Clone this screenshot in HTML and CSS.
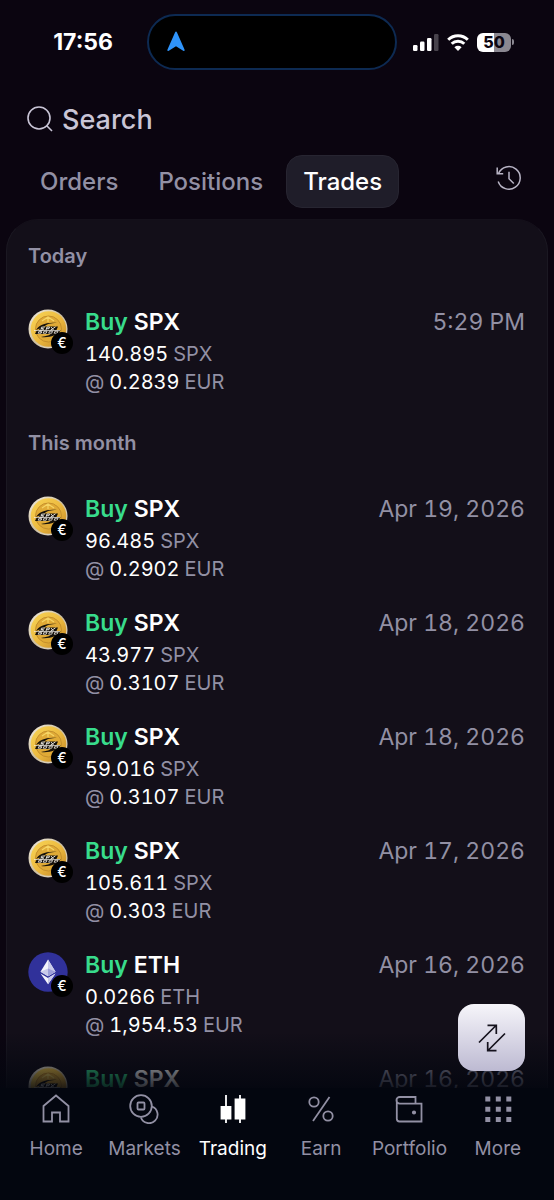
FILE: index.html
```
<!DOCTYPE html>
<html lang="en">
<head>
  <meta charset="UTF-8" />
  <meta name="viewport" content="width=device-width, initial-scale=1" />
  <title>Trades</title>
  <link rel="stylesheet" href="styles.css">
</head>
<body>

  <!-- Shared drawings -->
  <svg class="sprite" aria-hidden="true">
    <defs>
      <linearGradient id="rim" x1="0" y1="0" x2="1" y2="1">
        <stop offset="0" stop-color="#f4efe2" />
        <stop offset="0.5" stop-color="#cdbf9f" />
        <stop offset="1" stop-color="#e9e4dc" />
      </linearGradient>
      <linearGradient id="gold" x1="0" y1="0" x2="1" y2="1">
        <stop offset="0" stop-color="#f8d557" />
        <stop offset="0.5" stop-color="#edbb40" />
        <stop offset="1" stop-color="#c08424" />
      </linearGradient>
      <symbol id="coin-spx" viewBox="0 0 40 40">
        <circle cx="20" cy="20" r="19.5" fill="url(#rim)" />
        <circle cx="20.5" cy="20" r="17.8" fill="url(#gold)" />
        <circle cx="20.5" cy="20" r="13" fill="#e0aa36" stroke="#c48f2c" stroke-width="1" />
        <path d="M14 12l6-4 6 4M20 8v5" fill="none" stroke="#f6d565" stroke-width="1.200" />
        <path d="M8 21c3-5 10-8 21-7-7 0-10 1-12 3zM31 22c-2 4-9 7-18 6 6-1 9-2 11-4z" fill="#15110a" />
        <path d="M12 17.500h18l-1.500 3.500h4l-2 4H7l2-4h2z" fill="#15110a" />
        <path d="M17 18l-3.500.2-.5 1.200 2.500.3-.5 1.300-3.500.2M18 21l1-3h2.500l-.5 1.700h-2M23 18l2.500 3M27.500 17.800l-5 3.400" fill="none" stroke="#f2eee6" stroke-width="0.9" />
        <path d="M14 22.200h-3l-.8 2h3l.5-1.200h-2M19 22.200h-3l-.8 2h3zM24.500 22.200h-3l-.8 2h3zM30 22.200h-3l-.8 2h3z" fill="none" stroke="#f2eee6" stroke-width="0.800" />
        <path d="M6 21.500h26" stroke="#f2eee6" stroke-width="0.700" />
      </symbol>
      <symbol id="coin-eth" viewBox="0 0 40 40">
        <circle cx="20" cy="20" r="19.700" fill="#30319a" />
        <path d="M20 7.500l-7.500 12.300L20 24.300l7.500-4.500z" fill="#f4f4fb" />
        <path d="M20 7.500v16.800l7.500-4.500zM20 16.500v7.800l-7.500-4.500z" fill="#c9caea" />
        <path d="M20 16.500v7.800l7.500-4.500z" fill="#9d9fd8" />
        <path d="M12.500 21.500L20 32.300l7.500-10.800L20 26z" fill="#f4f4fb" />
        <path d="M20 26v6.300l7.500-10.800z" fill="#c9caea" />
      </symbol>
    </defs>
  </svg>

  <div class="app">

    <div class="status-bar">
      <span class="status-time">17:56</span>
      <div class="island">
        <svg width="20" height="22" viewBox="0 0 20 22" fill="#2f94fb">
          <path d="M9 1.500q1-1.800 2 0l7.500 17q.6 2-1.300 1.300L10 15.300l-7.200 4.500q-1.900.7-1.300-1.300z" />
        </svg>
      </div>
      <div class="status-icons">
        <svg width="26" height="17" viewBox="0 0 26 17" fill="#fff">
          <rect x="0" y="11" width="4.500" height="6" rx="1.200" />
          <rect x="7" y="7.500" width="4.500" height="9.500" rx="1.200" />
          <rect x="14" y="4" width="4.500" height="13" rx="1.200" />
          <rect x="21" y="0" width="4.500" height="17" rx="1.200" opacity="0.25" />
        </svg>
        <svg width="22" height="17" viewBox="0 0 22 17" fill="none" stroke="#fff" stroke-width="3">
          <path d="M1.200 5.700a14 14 0 0 1 19.600 0" />
          <path d="M4.700 9.700a9 9 0 0 1 12.600 0" />
          <path d="M11 17l-3.600-3.700a5.200 5.200 0 0 1 7.200 0z" fill="#fff" stroke="none" />
        </svg>
        <div class="battery"><span class="battery-level">50</span></div>
      </div>
    </div>

    <label class="search">
      <svg width="26" height="26" viewBox="0 0 26 26" fill="none" stroke="#c9c5d6" stroke-width="1.600">
        <circle cx="12" cy="12" r="11" />
        <path d="M19.500 19.500l5.500 5.500" />
      </svg>
      <input type="search" placeholder="Search" aria-label="Search" />
    </label>

    <div class="toolbar">
      <div class="tabs">
        <button type="button" class="tab">Orders</button>
        <button type="button" class="tab">Positions</button>
        <button type="button" class="tab active">Trades</button>
      </div>
      <button type="button" class="history-btn" aria-label="History">
        <svg width="26" height="26" viewBox="0 0 26 26" fill="none" stroke="#b9b5c6" stroke-width="1.500">
          <path d="M2.500 8.500a11.300 11.300 0 1 1-.3 8" />
          <path d="M1.200 2.500v6.300h6M13 6.800v7l4.800 4.700" />
        </svg>
      </button>
    </div>

    <main class="card">
      <section class="group">
        <h2>Today</h2>
        <ul>
          <li class="trade">
            <div class="coin"><svg><use href="#coin-spx" /></svg><span class="badge">€</span></div>
            <div class="info">
              <h3><span class="buy">Buy</span> <span>SPX</span></h3>
              <p><b>140.895</b> <span>SPX</span></p>
              <p><span>@</span> <b>0.2839</b> <span>EUR</span></p>
            </div>
            <time>5:29 PM</time>
          </li>
        </ul>
      </section>

      <section class="group">
        <h2>This month</h2>
        <ul>
          <li class="trade">
            <div class="coin"><svg><use href="#coin-spx" /></svg><span class="badge">€</span></div>
            <div class="info">
              <h3><span class="buy">Buy</span> <span>SPX</span></h3>
              <p><b>96.485</b> <span>SPX</span></p>
              <p><span>@</span> <b>0.2902</b> <span>EUR</span></p>
            </div>
            <time>Apr 19, 2026</time>
          </li>
          <li class="trade">
            <div class="coin"><svg><use href="#coin-spx" /></svg><span class="badge">€</span></div>
            <div class="info">
              <h3><span class="buy">Buy</span> <span>SPX</span></h3>
              <p><b>43.977</b> <span>SPX</span></p>
              <p><span>@</span> <b>0.3107</b> <span>EUR</span></p>
            </div>
            <time>Apr 18, 2026</time>
          </li>
          <li class="trade">
            <div class="coin"><svg><use href="#coin-spx" /></svg><span class="badge">€</span></div>
            <div class="info">
              <h3><span class="buy">Buy</span> <span>SPX</span></h3>
              <p><b>59.016</b> <span>SPX</span></p>
              <p><span>@</span> <b>0.3107</b> <span>EUR</span></p>
            </div>
            <time>Apr 18, 2026</time>
          </li>
          <li class="trade">
            <div class="coin"><svg><use href="#coin-spx" /></svg><span class="badge">€</span></div>
            <div class="info">
              <h3><span class="buy">Buy</span> <span>SPX</span></h3>
              <p><b>105.611</b> <span>SPX</span></p>
              <p><span>@</span> <b>0.303</b> <span>EUR</span></p>
            </div>
            <time>Apr 17, 2026</time>
          </li>
          <li class="trade">
            <div class="coin"><svg><use href="#coin-eth" /></svg><span class="badge">€</span></div>
            <div class="info">
              <h3><span class="buy">Buy</span> <span>ETH</span></h3>
              <p><b>0.0266</b> <span>ETH</span></p>
              <p><span>@</span> <b>1,954.53</b> <span>EUR</span></p>
            </div>
            <time>Apr 16, 2026</time>
          </li>
          <li class="trade">
            <div class="coin"><svg><use href="#coin-spx" /></svg></div>
            <div class="info">
              <h3><span class="buy">Buy</span> <span>SPX</span></h3>
            </div>
            <time>Apr 16, 2026</time>
          </li>
        </ul>
      </section>
    </main>

    <div class="bottom">
      <button type="button" class="trade-btn" aria-label="New trade">
        <svg width="28" height="28" viewBox="0 0 28 28" fill="none" stroke="#15121d" stroke-width="1.700">
          <path d="M1 18.500L18 1.500M9.500 1.300h8.800v8.800" />
          <path d="M27 9.500l-17 17M18.500 26.700H9.700v-8.800" />
        </svg>
      </button>

      <nav>
        <a href="#">
          <svg viewBox="0 0 30 30"><path d="M2.500 12L15 1.500 27.500 12v15.500H19v-9h-8v9H2.500z" /></svg>
          Home
        </a>
        <a href="#">
          <svg viewBox="0 0 30 30">
            <circle cx="12" cy="12" r="10.800" />
            <rect x="8.500" y="8.500" width="7" height="7" rx="1" />
            <path d="M22.900 12.500a8.600 8.600 0 1 1-11 11" />
          </svg>
          Markets
        </a>
        <a href="#" class="active">
          <svg viewBox="0 0 30 30">
            <path d="M8 1v28M22 1v28" />
            <path d="M3.500 13h9v11.500h-9zM17.500 5.500h9v19h-9z" fill="currentColor" />
          </svg>
          Trading
        </a>
        <a href="#">
          <svg viewBox="0 0 30 30">
            <circle cx="8" cy="8" r="4.700" />
            <circle cx="22" cy="22" r="4.700" />
            <path d="M23.500 3L7 27" />
          </svg>
          Earn
        </a>
        <a href="#">
          <svg viewBox="0 0 30 30">
            <path d="M21.500 9V3H5.800a3 3 0 0 0 0 6.700h21.700v17.800H5.500q-2.700 0-2.700-2.700V6.300" />
            <circle cx="20" cy="18.500" r="1.200" fill="currentColor" />
          </svg>
          Portfolio
        </a>
        <a href="#">
          <svg viewBox="0 0 30 30">
            <path d="M2.300 5h5M12.800 5h5M23.300 5h5M2.300 15.300h5M12.800 15.300h5M23.300 15.300h5M2.300 25.600h5M12.800 25.600h5M23.300 25.600h5" stroke-width="5" />
          </svg>
          More
        </a>
      </nav>
    </div>

  </div>

</body>
</html>
```
FILE: styles.css
```
* {
  box-sizing: border-box;
}
body {
  margin: 0;
  font-family: Inter, sans-serif;
  background-color: #0b0510;
  color: #fff;
}
h2, h3, p, ul {
  margin: 0;
  padding: 0;
}
ul {
  list-style: none;
}
button {
  font-family: inherit;
  background: none;
  border: none;
  cursor: pointer;
}
.sprite {
  position: absolute;
  width: 0;
  height: 0;
}
.app {
  display: flex;
  flex-direction: column;
  height: 100vh;
  overflow: hidden;
}

/* Status bar */
.status-bar {
  display: grid;
  grid-template-columns: 1fr 250px 1fr;
  align-items: center;
  padding: 14px 10px 0 0;
}
.status-time {
  justify-self: end;
  padding-right: 34px;
  font-size: 23px;
  font-weight: 700;
}
.island {
  display: flex;
  align-items: center;
  height: 56px;
  padding-left: 17px;
  background-color: #000;
  border: 2px solid #0d2a52;
  border-radius: 28px;
}
.status-icons {
  display: flex;
  align-items: center;
  gap: 8px;
  padding-left: 16px;
}
.battery {
  display: flex;
  align-items: center;
}
.battery-level {
  width: 34px;
  border-radius: 6px;
  background: linear-gradient(90deg, #fff 50%, #8b8891 50%);
  color: #0b0510;
  font-size: 16px;
  font-weight: 800;
  line-height: 19px;
  text-align: center;
}
.battery::after {
  content: "";
  width: 2px;
  height: 6px;
  margin-left: 1px;
  border-radius: 0 2px 2px 0;
  background-color: #8b8891;
}

/* Search and tabs */
.search {
  display: flex;
  align-items: center;
  gap: 9px;
  margin-top: 29px;
  padding: 0 27px;
}
.search input {
  flex: 1;
  min-width: 0;
  height: 40px;
  padding: 0;
  border: none;
  outline: none;
  background: none;
  color: #fff;
  font-family: inherit;
  font-size: 27px;
  font-weight: 500;
}
.search input::placeholder {
  color: #c9c5d6;
}
.toolbar {
  display: flex;
  justify-content: space-between;
  margin-top: 16px;
  padding: 0 32px 0 23px;
}
.tabs {
  display: flex;
  gap: 6px;
}
.tab {
  height: 53px;
  padding: 0 16px;
  border: 1px solid transparent;
  border-radius: 16px;
  color: #9290a4;
  font-size: 24px;
  font-weight: 500;
}
.tab.active {
  background-color: #1f1d29;
  border-color: #272531;
  color: #fff;
}
.history-btn {
  height: 46px;
  padding: 0;
}
.history-btn svg {
  display: block;
}

/* Trades list */
.card {
  flex: 1;
  min-height: 0;
  margin: 11px 6px 0;
  padding: 23px 22px 0 21px;
  overflow: hidden;
  background-color: #130f19;
  border: 1px solid #1b1822;
  border-top-color: #15111b;
  border-bottom: none;
  border-radius: 32px 32px 0 0;
}
.group {
  margin-bottom: 34px;
}
.group h2 {
  margin-bottom: 37px;
  color: #9290a4;
  font-size: 20px;
  font-weight: 600;
  line-height: 26px;
}
.trade {
  display: flex;
  margin-bottom: 24px;
  font-variant-numeric: tabular-nums;
}
.trade:last-child {
  margin-bottom: 0;
}
.coin {
  position: relative;
  width: 40px;
  height: 40px;
  margin: 3px 17px 0 0;
}
.coin svg {
  display: block;
  width: 40px;
  height: 40px;
}
.badge {
  position: absolute;
  right: -5px;
  bottom: -5px;
  width: 22px;
  border-radius: 50%;
  background-color: #000;
  font-size: 14px;
  font-weight: 500;
  line-height: 22px;
  text-align: center;
}
.info {
  flex: 1;
}
.info h3 {
  display: flex;
  gap: 6px;
  margin-bottom: 2px;
  font-size: 23px;
  font-weight: 600;
  line-height: 32px;
}
.buy {
  color: #38dc8c;
}
.info p {
  display: flex;
  gap: 5px;
  color: #9290a4;
  font-size: 20px;
  line-height: 28px;
}
.info b {
  color: #fff;
  font-weight: 400;
}
.trade time {
  color: #9290a4;
  font-size: 23px;
  line-height: 32px;
}

/* Bottom navigation */
.bottom {
  position: relative;
  background-color: #03060f;
}
.bottom::before {
  content: "";
  position: absolute;
  right: 0;
  bottom: 100%;
  left: 0;
  height: 56px;
  background: linear-gradient(rgba(3, 6, 15, 0), rgba(3, 6, 15, 0.85));
}
.trade-btn {
  position: absolute;
  right: 29px;
  bottom: 100%;
  display: flex;
  align-items: center;
  justify-content: center;
  width: 67px;
  height: 67px;
  margin-bottom: 17px;
  border-radius: 16px;
  background: linear-gradient(#f6f5fa, #bdbad2);
}
nav {
  display: grid;
  grid-template-columns: repeat(6, 1fr);
  padding: 6px 12px 37px;
}
nav a {
  display: flex;
  flex-direction: column;
  align-items: center;
  gap: 11px;
  color: #9290a4;
  font-size: 19px;
  line-height: 28px;
  text-decoration: none;
}
nav svg {
  width: 30px;
  height: 30px;
  fill: none;
  stroke: currentColor;
  stroke-width: 1.8;
}
nav .active {
  color: #fff;
}
```
